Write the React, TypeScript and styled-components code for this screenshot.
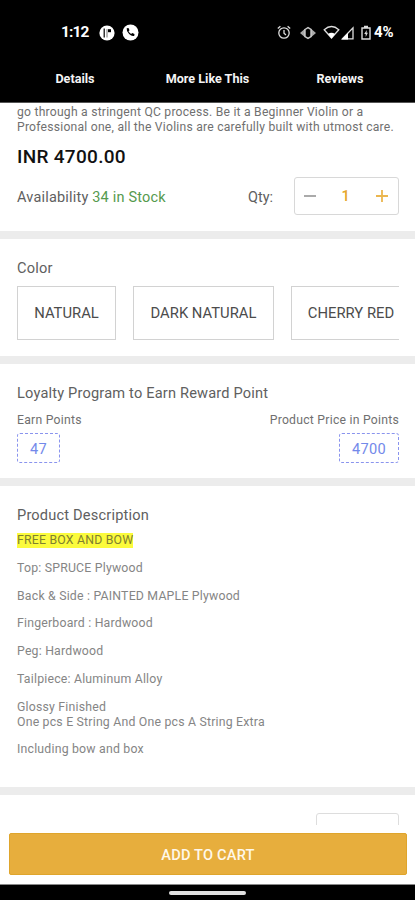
import React from "react";
import styled, { createGlobalStyle } from "styled-components";

const GlobalStyle = createGlobalStyle`
  * { box-sizing: border-box; }
  body { margin: 0; background: #fff; font-family: Roboto, "Liberation Sans", sans-serif; }
  p, h2 { margin: 0; font-weight: 400; }
  button { font: inherit; background: none; border: 0; padding: 0; }
`;

const Screen = styled.div`
  width: 415px;
  height: 900px;
  display: flex;
  flex-direction: column;
  overflow: hidden;
  background: #fff;
`;

const Header = styled.header`
  height: 103px;
  flex: none;
  background: #000;
  color: #fff;
  border-bottom: 1px solid #555;
`;

const StatusBar = styled.div`
  height: 58px;
  padding: 7px 17px 0 61px;
  display: flex;
  align-items: center;
`;

const Clock = styled.span`
  width: 38px;
  margin-top: -2px;
  font: 700 15.5px/20px Roboto, sans-serif;
  letter-spacing: -0.9px;
`;

const AppIcons = styled.div`
  display: flex;
  align-items: center;
  gap: 7px;
  flex: 1;
`;

const SystemIcons = styled.div`
  display: flex;
  align-items: center;
`;

const Battery = styled.span`
  width: 24px;
  margin: -2px 0 0 3px;
  font: 700 15px/20px Roboto, sans-serif;
  letter-spacing: -0.1px;
`;

const Glyph = styled.svg<{ $gap?: number }>`
  display: block;
  flex: none;
  margin-left: ${(p) => p.$gap ?? 0}px;
`;

const Tabs = styled.nav`
  display: grid;
  grid-template-columns: 150px 115px 150px;
  justify-items: center;
`;

const Tab = styled.button`
  color: #f4f4f4;
  font-size: 12.6px;
  line-height: 15px;
  height: 40px;
  padding-bottom: 0;
  font-weight: 700;
  white-space: nowrap;
`;

const Content = styled.main`
  height: 722px;
  flex: none;
  overflow: hidden;
`;

const Section = styled.section<{ $h: number; $top: number }>`
  height: ${(p) => p.$h}px;
  padding: ${(p) => p.$top}px 16px 0 17px;
  border-bottom: 8px solid #ececec;
  overflow: hidden;
`;

const Blurb = styled.p`
  font-size: 12.15px;
  line-height: 15px;
  color: #707070;
  white-space: pre;
  letter-spacing: 0.23px;
`;

const Price = styled.p`
  margin-top: 10px;
  font-size: 19px;
  line-height: 24px;
  font-weight: 500;
  color: #111;
  letter-spacing: 0.3px;
`;

const StockRow = styled.div`
  display: flex;
  align-items: center;
  margin-top: 8px;
  height: 38px;
  font-size: 14.5px;
  color: #606060;
`;

const Stock = styled.p`
  flex: 1;
  padding-top: 2px;
  letter-spacing: 0.19px;
`;

const Qty = styled.span`
  padding-top: 2px;
`;

const InStock = styled.span`
  color: #559a4e;
`;

const Stepper = styled.div`
  width: 105px;
  height: 38px;
  margin-left: 21px;
  border: 1px solid #d8d8d8;
  border-radius: 3px;
  display: grid;
  grid-template-columns: 30px 1fr 32px;
  place-items: center;
  color: #e5a62c;
  font-weight: 500;
`;

const Heading = styled.h2`
  font-size: 14.6px;
  line-height: 18px;
  color: #606060;
  letter-spacing: 0.18px;
  white-space: nowrap;
`;

const Swatches = styled.div`
  display: flex;
  gap: 17px;
  margin-top: 9px;
  overflow: hidden;
`;

const Swatch = styled.button<{ $w: number }>`
  flex: none;
  width: ${(p) => p.$w}px;
  height: 54px;
  border: 1px solid #d2d2d2;
  color: #4c4c4c;
  font-size: 14.8px;
  white-space: nowrap;
`;

const PointsRow = styled.div`
  display: flex;
  justify-content: space-between;
  margin-top: 10px;
`;

const Points = styled.div<{ $end?: boolean }>`
  display: flex;
  flex-direction: column;
  align-items: ${(p) => (p.$end ? "flex-end" : "flex-start")};
  gap: 5px;
  font-size: 12.2px;
  line-height: 16px;
  color: #707070;
  letter-spacing: 0.25px;
`;

const Coupon = styled.div<{ $w: number }>`
  width: ${(p) => p.$w}px;
  height: 30px;
  padding-top: 1px;
  display: grid;
  place-items: center;
  border: 1px dashed #8a94ee;
  border-radius: 3px;
  color: #7389ea;
  font-size: 14.6px;
`;

const Details = styled.div`
  margin-top: 9px;
  display: flex;
  flex-direction: column;
  align-items: flex-start;
  gap: 12.75px;
  font-size: 12.3px;
  line-height: 15px;
  color: #858585;
  letter-spacing: 0.2px;
  white-space: pre;
`;

const Mark = styled.span`
  background: #fbfb3c;
  color: #80802f;
`;

const PeekRow = styled.div`
  display: flex;
  justify-content: flex-end;
  padding: 18px 16px 0 0;
`;

const PeekBox = styled.div`
  width: 83px;
  height: 38px;
  border: 1px solid #ddd;
  border-radius: 3px;
`;

const CartBar = styled.div`
  height: 60px;
  flex: none;
  padding: 8px 8px 10px 9px;
  border-bottom: 1px solid #888;
  background: #fff;
`;

const CartButton = styled.button`
  display: block;
  width: 100%;
  height: 42px;
  padding-top: 1px;
  background: #e7ae3d;
  border: 1px solid #dfa52c;
  border-radius: 2px;
  color: #fff8ea;
  font-size: 14.6px;
  font-weight: 500;
  letter-spacing: 0.2px;
`;

const NavBar = styled.footer`
  height: 15px;
  flex: none;
  background: #000;
  display: flex;
  justify-content: center;
  padding-top: 6px;
`;

const HomePill = styled.div`
  width: 77px;
  height: 4px;
  border-radius: 2px;
  background: #e2e2e2;
`;

const description = [
  "Top: SPRUCE Plywood",
  "Back & Side : PAINTED MAPLE Plywood",
  "Fingerboard : Hardwood",
  "Peg: Hardwood",
  "Tailpiece: Aluminum Alloy",
  "Glossy Finished\nOne pcs E String And One pcs A String Extra",
  "Including bow and box",
];

const StatusIcons = () => (
  <SystemIcons>
    <Glyph width="14" height="15" viewBox="0 0 14 15" fill="none" stroke="#ddd" strokeWidth="1.3">
      <circle cx="7" cy="8" r="5.2" />
      <path d="M.8 3.4 3.4 1.2M13.2 3.4 10.6 1.2M7 5v3.2l2 1.8" />
    </Glyph>
    <Glyph $gap={9} width="16" height="14" viewBox="0 0 16 14" fill="#aaa">
      <path d="M0 7 5 2.8v8.4zM16 7l-5-4.2v8.4z" />
      <path d="M5 3.5 8 1.6l3 1.9v7l-3 1.9-3-1.9z" fill="#000" stroke="#ccc" strokeWidth="1.4" />
    </Glyph>
    <Glyph $gap={7} width="17" height="15" viewBox="0 0 17 15">
      <path d="M1.2 4.7Q8.5-1.8 15.8 4.7L8.5 13z" fill="none" stroke="#ddd" strokeWidth="1.3" />
      <path d="M5 9q3.5-2.4 7 0L8.5 13.4z" fill="#fff" />
    </Glyph>
    <Glyph $gap={1} width="13" height="14" viewBox="0 0 13 14">
      <path d="M1.5 12.8 12 1.8v11z" fill="none" stroke="#ddd" strokeWidth="1.3" />
      <path d="M.5 13.4 7 6.8v6.6z" fill="#fff" />
    </Glyph>
    <Glyph $gap={7} width="10" height="15" viewBox="0 0 10 15">
      <path d="M1 3h8v11H1z" fill="none" stroke="#ddd" strokeWidth="1.4" />
      <path d="M3 .8h4V3H3zM5.8 5 3.2 9h1.5v3l2.2-4.2H5.6z" fill="#ddd" />
    </Glyph>
    <Battery>4%</Battery>
  </SystemIcons>
);

export default function App() {
  return (
    <>
      <GlobalStyle />
      <Screen>
        <Header>
          <StatusBar>
            <Clock>1:12</Clock>
            <AppIcons>
              <Glyph width="16" height="16" viewBox="0 0 16 16">
                <circle cx="8" cy="8" r="7.6" fill="#fff" />
                <path d="M5.2 3.5v9" fill="none" stroke="#000" strokeWidth="1.2" />
                <path d="M8 12.5V4.2" fill="none" stroke="#777" strokeWidth="1" />
                <path d="M9 4.2h3v3H9z" fill="#000" />
              </Glyph>
              <Glyph width="17" height="17" viewBox="0 0 17 17">
                <circle cx="8.5" cy="8.5" r="8" fill="#fff" />
                <path d="m4.7 4.2 1.8-.3 1 2.4-1 1q.9 1.8 2.6 2.6l1.1-1 2.3 1-.3 2q-2.4.8-5.1-1.8-2.9-2.9-2.4-5.9Z" fill="#000" />
              </Glyph>
            </AppIcons>
            <StatusIcons />
          </StatusBar>
          <Tabs>
            <Tab>Details</Tab>
            <Tab>More Like This</Tab>
            <Tab>Reviews</Tab>
          </Tabs>
        </Header>
        <Content>
          <Section $h={136} $top={2}>
            <Blurb>{"go through a stringent QC process. Be it a Beginner Violin or a\nProfessional one, all the Violins are carefully built with utmost care."}</Blurb>
            <Price>INR 4700.00</Price>
            <StockRow>
              <Stock>Availability <InStock>34 in Stock</InStock></Stock>
              <Qty>Qty:</Qty>
              <Stepper>
                <Glyph width="12" height="12" viewBox="0 0 12 12" stroke="#aaa" strokeWidth="2"><path d="M0 6h12" /></Glyph>
                <span>1</span>
                <Glyph width="12" height="12" viewBox="0 0 12 12" stroke="#ebb64f" strokeWidth="1.8"><path d="M0 6h12M6 0v12" /></Glyph>
              </Stepper>
            </StockRow>
          </Section>
          <Section $h={125} $top={20}>
            <Heading>Color</Heading>
            <Swatches>
              <Swatch $w={99}>NATURAL</Swatch>
              <Swatch $w={141}>DARK NATURAL</Swatch>
              <Swatch $w={120}>CHERRY RED</Swatch>
            </Swatches>
          </Section>
          <Section $h={122} $top={20}>
            <Heading>Loyalty Program to Earn Reward Point</Heading>
            <PointsRow>
              <Points>Earn Points<Coupon $w={43}>47</Coupon></Points>
              <Points $end>Product Price in Points<Coupon $w={60}>4700</Coupon></Points>
            </PointsRow>
          </Section>
          <Section $h={309} $top={20}>
            <Heading>Product Description</Heading>
            <Details>
              <Mark>FREE BOX AND BOW</Mark>
              {description.map((line) => <p key={line}>{line}</p>)}
            </Details>
          </Section>
          <PeekRow><PeekBox /></PeekRow>
        </Content>
        <CartBar><CartButton>ADD TO CART</CartButton></CartBar>
        <NavBar><HomePill /></NavBar>
      </Screen>
    </>
  );
}
